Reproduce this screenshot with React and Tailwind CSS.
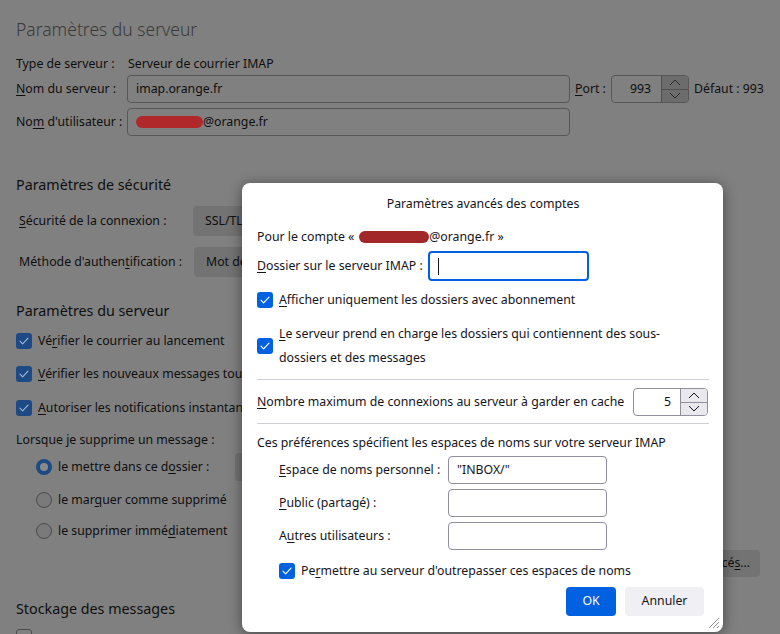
// Thunderbird server settings page dimmed behind the "advanced account settings" dialog

function Redaction({ className }) {
  return <span className={`inline-block h-[12px] rounded-full ${className}`} />;
}

function CheckBox({ dim = false, checked = true }) {
  if (!checked) {
    return <span className="inline-block w-4 h-4 shrink-0 rounded-[3px] border border-[#4d4d4d]" />;
  }
  return (
    <span
      className={`inline-flex items-center justify-center w-4 h-4 shrink-0 rounded-[3px] ${
        dim ? 'bg-[#1d4a84]' : 'bg-[#0061e0]'
      }`}
    >
      <svg width="12" height="12" viewBox="0 0 12 12" fill="none">
        <path
          d="M2 6.2l2.6 2.6L10 3.2"
          stroke={dim ? '#9fb3cf' : '#ffffff'}
          strokeWidth="1.2"
          strokeLinecap="round"
          strokeLinejoin="round"
        />
      </svg>
    </span>
  );
}

function Radio({ selected = false }) {
  if (selected) {
    return <span className="inline-block w-4 h-4 shrink-0 rounded-full border-[4px] border-[#1d4a84] bg-[#8a8a8a]" />;
  }
  return <span className="inline-block w-4 h-4 shrink-0 rounded-full border border-[#4a4a4a] bg-[#7a7a7a]" />;
}

function Spinner({ dim = false }) {
  const stroke = dim ? '#2a2a2a' : '#15141a';
  return (
    <div
      className={`flex flex-col w-[27px] h-full border-l ${
        dim ? 'bg-[#6c6c6c] border-[#4f4f4f]' : 'bg-[#e9e9ed] border-[#8f8f9d]'
      }`}
    >
      <div className={`flex-1 flex items-center justify-center border-b ${dim ? 'border-[#4f4f4f]' : 'border-[#8f8f9d]'}`}>
        <svg width="12" height="7" viewBox="0 0 12 7" fill="none">
          <path d="M1 6l5-5 5 5" stroke={stroke} strokeWidth="1" />
        </svg>
      </div>
      <div className="flex-1 flex items-center justify-center">
        <svg width="12" height="7" viewBox="0 0 12 7" fill="none">
          <path d="M1 1l5 5 5-5" stroke={stroke} strokeWidth="1" />
        </svg>
      </div>
    </div>
  );
}

function Background() {
  const field = 'h-[28px] border border-[#575757] rounded-[4px] flex items-center';
  const select = 'h-[30px] w-[220px] bg-[#737373] rounded-[4px] flex items-center px-3';
  return (
    <div className="pl-4 pt-[15px]">
      <div className="h-7 leading-7 text-[17.5px] font-light text-[#3a3a3a]">Paramètres du serveur</div>

      <div className="mt-[11px] h-5 flex items-center">
        <span className="w-[112px]">Type de serveur :</span>
        <span>Serveur de courrier IMAP</span>
      </div>

      <div className="mt-[1px] h-[28px] flex items-center">
        <span className="w-[111px]">
          <u className="underline-offset-2">N</u>om du serveur :
        </span>
        <div className={`${field} w-[443px] px-2`}>imap.orange.fr</div>
        <span className="w-[41px] pl-[5px]">
          <u className="underline-offset-2">P</u>ort :
        </span>
        <div className={`${field} w-[78px] overflow-hidden`}>
          <span className="flex-1 text-right pr-[10px]">993</span>
          <Spinner dim />
        </div>
        <span className="ml-[5px]">Défaut : 993</span>
      </div>

      <div className="mt-[5px] h-[28px] flex items-center">
        <span className="w-[111px]">
          No<u className="underline-offset-2">m</u> d'utilisateur :
        </span>
        <div className={`${field} w-[443px] pl-2`}>
          <Redaction className="w-[67px] bg-[#b0282a]" />
          <span>@orange.fr</span>
        </div>
      </div>

      <div className="mt-[39px] h-5 flex items-center text-[14.3px]">Paramètres de sécurité</div>

      <div className="mt-[11px] h-[30px] flex items-center">
        <span className="w-[177px] pl-[3px]">
          <u className="underline-offset-2">S</u>écurité de la connexion :
        </span>
        <div className={select}>SSL/TLS</div>
      </div>

      <div className="mt-[11px] h-[30px] flex items-center">
        <span className="w-[178px] pl-[3px]">
          Méthode d'authen<u className="underline-offset-2">t</u>ification :
        </span>
        <div className={select}>Mot de passe normal</div>
      </div>

      <div className="mt-[24px] h-5 flex items-center text-[14.3px]">Paramètres du serveur</div>

      <div className="mt-[10px] h-5 flex items-center gap-[6px]">
        <CheckBox dim />
        <span>
          Vé<u className="underline-offset-2">r</u>ifier le courrier au lancement
        </span>
      </div>
      <div className="mt-[13px] h-5 flex items-center gap-[6px]">
        <CheckBox dim />
        <span>
          <u className="underline-offset-2">V</u>érifier les nouveaux messages toutes les 10 minutes
        </span>
      </div>
      <div className="mt-[14px] h-5 flex items-center gap-[6px]">
        <CheckBox dim />
        <span>
          <u className="underline-offset-2">A</u>utoriser les notifications instantanées
        </span>
      </div>

      <div className="mt-3 h-5 flex items-center">Lorsque je supprime un message :</div>

      <div className="mt-[3px] h-[28px] flex items-center pl-5">
        <Radio selected />
        <span className="ml-[6px] w-[177px]">
          le mettre dans ce d<u className="underline-offset-2">o</u>ssier :
        </span>
        <div className="h-[28px] w-[200px] bg-[#737373] rounded-[4px]" />
      </div>
      <div className="mt-[9px] h-5 flex items-center pl-5 gap-[6px]">
        <Radio />
        <span>
          le mar<u className="underline-offset-2">q</u>uer comme supprimé
        </span>
      </div>
      <div className="mt-[11px] h-5 flex items-center pl-5 gap-[6px]">
        <Radio />
        <span>
          le supprimer immé<u className="underline-offset-2">d</u>iatement
        </span>
      </div>

      <div className="mt-[9px] h-[27px] flex justify-end pr-5">
        <div className="w-[190px] h-[27px] bg-[#737373] rounded-[4px] flex items-center justify-end pr-[10px]">
          Paramètres avancé<u className="underline-offset-2">s</u>…
        </div>
      </div>

      <div className="mt-[22px] h-5 flex items-center text-[14.3px]">Stockage des messages</div>
      <div className="mt-[8px] h-5 flex items-center">
        <CheckBox checked={false} />
      </div>
    </div>
  );
}

function Dialog() {
  const field = 'w-[159px] h-[28px] border border-[#8f8f9d] rounded-[4px] flex items-center px-2';
  return (
    <div className="absolute left-[242px] top-[183px] w-[481px] h-[449px] bg-white rounded-[8px] shadow-[0_2px_14px_rgba(0,0,0,0.45)] text-[#15141a] pl-[15px] pr-[14px] pt-[11px]">
      <div className="h-5 flex items-center justify-center">Paramètres avancés des comptes</div>

      <div className="mt-[13px] h-5 flex items-center">
        <span>Pour le compte «</span>
        <Redaction className="ml-[5px] w-[70px] bg-[#a12729]" />
        <span>@orange.fr »</span>
      </div>

      <div className="mt-[4px] h-[30px] flex items-center">
        <span className="inline-block w-[171px] first-letter:underline first-letter:underline-offset-2">
          Dossier sur le serveur IMAP :
        </span>
        <div className="w-[161px] h-[30px] border-2 border-[#0061e0] rounded-[4px] flex items-center pl-[8px]">
          <span className="w-px h-[17px] bg-[#15141a]" />
        </div>
      </div>

      <div className="mt-[9px] h-5 flex items-center gap-[6px]">
        <CheckBox />
        <span>
          <u className="underline-offset-2">A</u>fficher uniquement les dossiers avec abonnement
        </span>
      </div>

      <div className="mt-[12px] flex items-center gap-[6px]">
        <CheckBox />
        <span className="leading-6">
          <u className="underline-offset-2">L</u>e serveur prend en charge les dossiers qui contiennent des sous-
          <br />
          dossiers et des messages
        </span>
      </div>

      <div className="mt-[9px] border-t border-[#cfcfd8]" />

      <div className="mt-[8px] h-[28px] flex items-center justify-between pr-px">
        <span className="inline-block first-letter:underline first-letter:underline-offset-2">
          Nombre maximum de connexions au serveur à garder en cache
        </span>
        <div className="w-[75px] h-[28px] border border-[#8f8f9d] rounded-[4px] flex items-center overflow-hidden">
          <span className="flex-1 text-right pr-[9px]">5</span>
          <Spinner />
        </div>
      </div>

      <div className="mt-[7px] border-t border-[#cfcfd8]" />

      <div className="mt-[9px] h-5 flex items-center">
        Ces préférences spécifient les espaces de noms sur votre serveur IMAP
      </div>

      <div className="mt-[3px] h-[28px] flex items-center pl-[22px]">
        <span className="w-[169px]">
          <u className="underline-offset-2">E</u>space de noms personnel :
        </span>
        <div className={field}>"INBOX/"</div>
      </div>
      <div className="mt-[5px] h-[28px] flex items-center pl-[22px]">
        <span className="w-[169px]">
          <u className="underline-offset-2">P</u>ublic (partagé) :
        </span>
        <div className={field} />
      </div>
      <div className="mt-[5px] h-[28px] flex items-center pl-[22px]">
        <span className="w-[169px]">
          A<u className="underline-offset-2">u</u>tres utilisateurs :
        </span>
        <div className={field} />
      </div>

      <div className="mt-[11px] h-5 flex items-center gap-[6px] pl-[22px]">
        <CheckBox />
        <span>
          Pe<u className="underline-offset-2">r</u>mettre au serveur d'outrepasser ces espaces de noms
        </span>
      </div>

      <div className="mt-[6px] flex justify-end gap-[9px] pr-[5px]">
        <div className="w-[50px] h-[29px] rounded-[4px] bg-[#0061e0] text-white flex items-center justify-center">OK</div>
        <div className="w-[79px] h-[29px] rounded-[4px] bg-[#f0f0f4] flex items-center justify-center">Annuler</div>
      </div>

      <svg className="absolute right-[3px] bottom-[3px]" width="14" height="14" viewBox="0 0 14 14">
        <path d="M13 3L3 13M13 7L7 13M13 11L11 13" stroke="#8f8f9d" strokeWidth="1" />
      </svg>
    </div>
  );
}

export default function App() {
  return (
    <div className="relative w-[780px] h-[634px] overflow-hidden whitespace-nowrap bg-[#808080] text-[12.3px] text-[#0f0f0f] font-['Noto_Sans',sans-serif]">
      <Background />
      <Dialog />
    </div>
  );
}
